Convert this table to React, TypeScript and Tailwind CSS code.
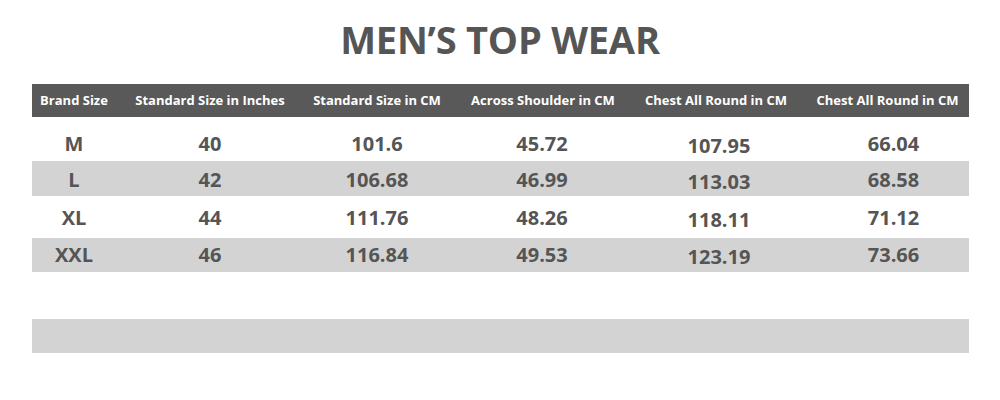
const cols = "grid grid-cols-[84px_188px_146px_186px_160px_1fr]";

const headers = [
  "Brand Size",
  "Standard Size in Inches",
  "Standard Size in CM",
  "Across Shoulder in CM",
  "Chest All Round in CM",
  "Chest All Round in CM",
];

const rows = [
  { cells: ["M", "40", "101.6", "45.72", "107.95", "66.04"], h: "h-[44px] pt-[10px]", bg: "bg-white" },
  { cells: ["L", "42", "106.68", "46.99", "113.03", "68.58"], h: "h-[35px] pt-[2px]", bg: "bg-[#d3d3d3]" },
  { cells: ["XL", "44", "111.76", "48.26", "118.11", "71.12"], h: "h-[42px] pt-[2px]", bg: "bg-white" },
  { cells: ["XXL", "46", "116.84", "49.53", "123.19", "73.66"], h: "h-[34px]", bg: "bg-[#d3d3d3]" },
];

// small per-column nudges so values sit where the picture has them
const nudge = ["", "", "", "pr-[2px]", "pl-[6px] translate-y-[2px]", "pl-[22px]"];
const headNudge = ["", "", "", "", "", "pl-[10px]"];

export default function App() {
  return (
    <div className="w-[1000px] h-[400px] bg-white font-['Open_Sans',sans-serif] text-[#555555] overflow-hidden">
      <h1 className="mt-[20px] text-center text-[38px] leading-[38px] font-bold tracking-[-0.2px]">
        MEN’S TOP WEAR
      </h1>

      <div className="mt-[26px] mx-[32px] w-[937px]">
        <div className={`${cols} h-[33px] items-center bg-[#595959] text-white text-[13px] font-bold`}>
          {headers.map((h, i) => (
            <div key={i} className={`text-center whitespace-nowrap ${headNudge[i]}`}>
              {h}
            </div>
          ))}
        </div>

        {rows.map((r, ri) => (
          <div key={ri} className={`${cols} ${r.h} ${r.bg} items-center text-[20px] font-bold`}>
            {r.cells.map((c, ci) => (
              <div key={ci} className={`text-center ${nudge[ci]}`}>
                {c}
              </div>
            ))}
          </div>
        ))}

        <div className="h-[47px]" />
        <div className="h-[34px] bg-[#d3d3d3]" />
      </div>
    </div>
  );
}
